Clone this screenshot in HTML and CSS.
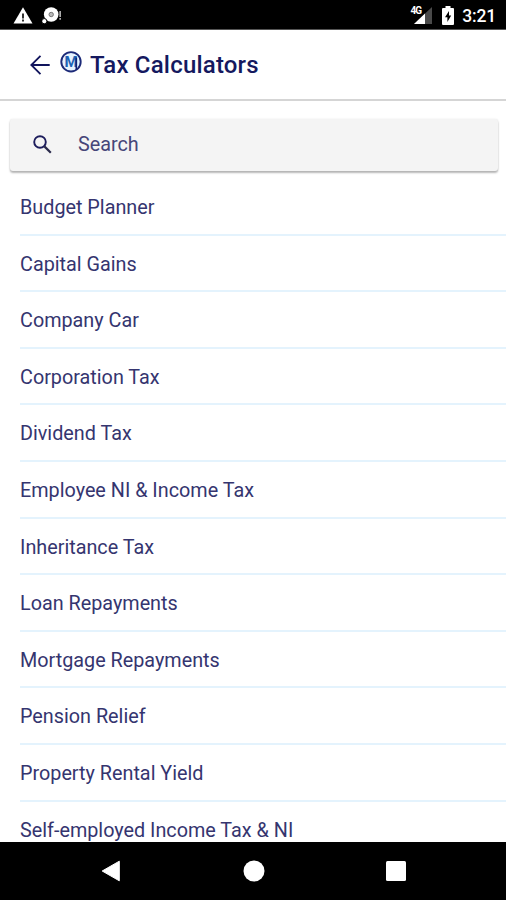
FILE: index.html
```html
<!DOCTYPE html>
<html lang="en">
<head>
    <meta charset="UTF-8">
    <meta name="viewport" content="width=device-width, initial-scale=1.0">
    <title>Tax Calculators</title>
    <link rel="stylesheet" href="styles.css">
</head>
<body>
    <div class="screen">
        <div class="status-bar">
            <svg class="status-warning" width="20" height="17" viewBox="0 0 20 17">
                <path d="M10 0.2 L19.5 16.5 H0.5 Z" fill="#fff"/>
                <path d="M9 6.5h2v5H9z M9 12.5h2v2H9z" fill="#333"/>
            </svg>
            <svg class="status-disc" width="20" height="17" viewBox="0 0 20 17">
                <circle cx="9.2" cy="7.5" r="7.3" fill="#fff"/>
                <circle cx="9.2" cy="7.5" r="2.2" fill="#bbb" stroke="#777" stroke-width="1"/>
                <circle cx="2.3" cy="14.2" r="2.6" fill="#fff" stroke="#000" stroke-width="1"/>
                <path d="M17.3 4h1.7v6h-1.7z M17.3 11h1.7v1.7h-1.7z" fill="#aaa"/>
            </svg>
            <div class="status-right">
                <span class="network">4G</span>
                <svg class="signal" width="18" height="17" viewBox="0 0 18 17">
                    <path d="M18 0V17H0Z" fill="#4a4a4a"/>
                    <path d="M11 6.6V17H0Z" fill="#fff"/>
                </svg>
                <svg class="battery" width="12" height="19" viewBox="0 0 12 19">
                    <path d="M3.5 0h5v2H11a1 1 0 0 1 1 1V18a1 1 0 0 1-1 1H1a1 1 0 0 1-1-1V3a1 1 0 0 1 1-1h2.5z" fill="#fff"/>
                    <path d="M7 5 L3 11.2 H5.4 V16 L9.2 9.6 H7 Z" fill="#000"/>
                </svg>
                <span class="clock">3:21</span>
            </div>
        </div>

        <header class="header">
            <svg class="back" width="20" height="20" viewBox="0 0 20 20">
                <path d="M19.7 10H1.5M10.5 0.8L1.3 10l9.2 9.2" fill="none" stroke="#10145c" stroke-width="1.8"/>
            </svg>
            <svg class="logo" width="22" height="22" viewBox="0 0 22 22">
                <circle cx="11" cy="10.8" r="9.7" fill="#e6f3ff" stroke="#1c2a78" stroke-width="1.9"/>
                <text x="11" y="16.2" class="logo-letter" text-anchor="middle">M</text>
                <path d="M16.3 6.5V18.5" stroke="#14206f" stroke-width="1.6"/>
            </svg>
            <h1 class="title">Tax Calculators</h1>
        </header>

        <main class="content">
            <div class="search">
                <svg class="search-icon" width="19" height="19" viewBox="0 0 19 19">
                    <circle cx="7" cy="7" r="5.8" fill="none" stroke="#1d1d5c" stroke-width="1.9"/>
                    <path d="M11.4 11.4l6.4 6.4" stroke="#2b2b4c" stroke-width="2.2"/>
                </svg>
                <span class="search-label">Search</span>
            </div>
            <ul class="list">
                <li>Budget Planner</li>
                <li>Capital Gains</li>
                <li>Company Car</li>
                <li>Corporation Tax</li>
                <li>Dividend Tax</li>
                <li>Employee NI &amp; Income Tax</li>
                <li>Inheritance Tax</li>
                <li>Loan Repayments</li>
                <li>Mortgage Repayments</li>
                <li>Pension Relief</li>
                <li>Property Rental Yield</li>
                <li>Self-employed Income Tax &amp; NI</li>
            </ul>
        </main>

        <nav class="nav-bar">
            <svg width="20" height="22" viewBox="0 0 20 22"><path d="M18.3 1.2V20.8L1.2 11Z" fill="#fff" stroke="#fff" stroke-linejoin="round"/></svg>
            <svg width="22" height="22" viewBox="0 0 22 22"><circle cx="11" cy="11" r="10.5" fill="#fff"/></svg>
            <svg width="20" height="20" viewBox="0 0 20 20"><rect width="20" height="20" rx="1.5" fill="#fff"/></svg>
        </nav>
    </div>
</body>
</html>
```
FILE: styles.css
```css
body {
    margin: 0;
    font-family: Roboto, sans-serif;
    background: #fff;
    color: #1a1a62;
}
.screen {
    display: flex;
    flex-direction: column;
    width: 506px;
    height: 900px;
    overflow: hidden;
}
.status-bar {
    display: flex;
    align-items: flex-start;
    flex: none;
    box-sizing: border-box;
    height: 30px;
    padding: 7px 10px 0 13px;
    background: #000;
    border-bottom: 1px solid #555;
    color: #fff;
}
.status-disc {
    margin-left: 9px;
}
.status-right {
    display: flex;
    margin-left: auto;
}
.network {
    margin-top: -2px;
    margin-right: -7px;
    font-size: 10px;
    font-weight: 700;
    line-height: 12px;
    letter-spacing: -0.8px;
    z-index: 1;
}
.signal {
    margin-right: 10px;
}
.battery {
    margin: -1px 8px 0 0;
}
.clock {
    font-size: 17.5px;
    font-weight: 500;
    line-height: 18px;
    letter-spacing: -0.2px;
}
.header {
    display: flex;
    align-items: center;
    flex: none;
    box-sizing: border-box;
    height: 71px;
    padding-left: 30px;
    border-bottom: 2px solid #d5d5d5;
}
.logo {
    margin: -5px 8px 0 10px;
}
.logo-letter {
    font-size: 15px;
    font-weight: 700;
    fill: #1d62b4;
}
.title {
    margin: 0;
    font-size: 24px;
    font-weight: 500;
    letter-spacing: 0.2px;
    color: #15195f;
}
.content {
    flex: 1;
    min-height: 0;
    overflow: hidden;
}
.search {
    display: flex;
    align-items: center;
    box-sizing: border-box;
    height: 52px;
    margin: 18px 8px 0 10px;
    padding: 0 0 2px 23px;
    background: #f4f4f4;
    border-radius: 3px;
    box-shadow: 0 2px 2px rgba(0, 0, 0, 0.28), 0 0 2px rgba(0, 0, 0, 0.1);
}
.search-label {
    margin-left: 26px;
    font-size: 19.8px;
    color: #464679;
}
.list {
    margin: 8px 0 0 20px;
    padding: 0;
    list-style: none;
}
.list li {
    box-sizing: border-box;
    height: 56.6px;
    border-bottom: 2px solid #e4f3fd;
    font-size: 19.8px;
    line-height: 57.5px;
    color: #35356f;
}
.nav-bar {
    display: flex;
    align-items: center;
    justify-content: space-between;
    flex: none;
    box-sizing: border-box;
    height: 58px;
    padding: 0 100px 0 101px;
    background: #000;
}
```
